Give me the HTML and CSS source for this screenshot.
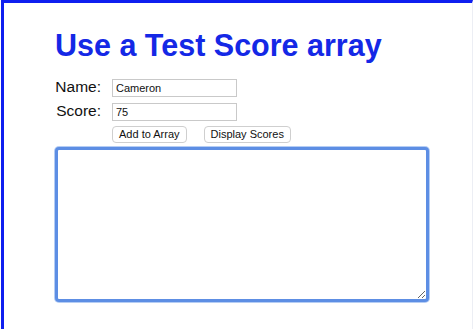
FILE: index.html
```html
<!DOCTYPE html>
<html>
<head>
<meta charset="utf-8">
<link rel="stylesheet" href="styles.css">
</head>
<body>
<main class="page">
  <h1 class="title">Use a Test Score array</h1>
  <div class="form">
    <label class="label" for="name">Name:</label>
    <input class="field" id="name" type="text" value="Cameron">
    <label class="label" for="score">Score:</label>
    <input class="field" id="score" type="text" value="75">
    <div class="buttons">
      <button class="btn" type="button">Add to Array</button>
      <button class="btn" type="button">Display Scores</button>
    </div>
  </div>
  <textarea class="output"></textarea>
</main>
</body>
</html>
```
FILE: styles.css
```css
html, body {
  margin: 0;
  padding: 0;
  background: #ffffff;
}
body {
  font-family: "Liberation Sans", Arial, sans-serif;
  overflow: hidden;
}
.page {
  box-sizing: border-box;
  margin-left: 1px;
  width: 472px;
  height: 340px;
  border-top: 3px solid #0f1ff0;
  border-left: 3px solid #0f1ff0;
  border-right: 1px solid #eceef4;
  padding: 24px 0 0 51px;
}
.title {
  margin: 0;
  font-size: 30.5px;
  line-height: 36px;
  font-weight: bold;
  color: #1428e6;
}
.form {
  margin-top: 15px;
  display: grid;
  grid-template-columns: 46px 125px;
  column-gap: 11px;
  row-gap: 5px;
  align-items: baseline;
}
.label {
  font-size: 15.5px;
  color: #111;
  text-align: right;
}
.field {
  box-sizing: border-box;
  width: 125px;
  height: 18px;
  margin: 0;
  padding: 0 3px;
  border: 1px solid #c9c9c9;
  font-family: "Liberation Sans", Arial, sans-serif;
  font-size: 11px;
  color: #111;
  background: #fff;
  outline: none;
}
.buttons {
  grid-column: 2;
  display: flex;
  gap: 17px;
  width: max-content;
}
.btn {
  box-sizing: border-box;
  height: 17px;
  margin: 0;
  padding: 0 6px;
  border: 1px solid #cfcfcf;
  border-radius: 4px;
  background: #fff;
  font-family: "Liberation Sans", Arial, sans-serif;
  font-size: 11px;
  color: #111;
  line-height: 15px;
}
.output {
  display: block;
  box-sizing: border-box;
  width: 374px;
  height: 155px;
  margin: 4px 0 0 0;
  border: 3px solid #5d8ee4;
  border-radius: 4px;
  box-shadow: 0 0 0 1px #b5cdf4;
  outline: none;
  background: #fff;
  resize: both;
}
```
